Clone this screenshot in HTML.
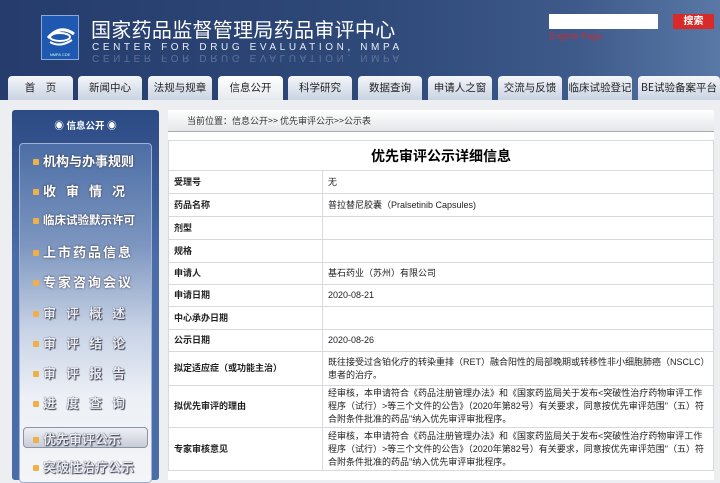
<!DOCTYPE html>
<html><head><meta charset="utf-8"><style>
*{margin:0;padding:0;box-sizing:border-box}
body{width:720px;height:480px;overflow:hidden;background:#eceef1;font-family:"Liberation Sans","Noto Sans CJK SC",sans-serif;position:relative}
.hdr{position:absolute;left:0;top:0;width:720px;height:100px;background:linear-gradient(90deg,#253c6c 0%,#2e4878 50%,#3d5a8a 80%,#5a78a6 100%)}
.logo{position:absolute;left:41px;top:15px;width:38px;height:45px;background:#1f58b0;border:1px solid #8ea8d8}
.logo span{position:absolute;bottom:2px;left:0;width:100%;text-align:center;font-size:4px;color:#cfe}
.t1{position:absolute;left:91px;top:14px;font-size:20px;color:#fff;letter-spacing:0.3px;white-space:nowrap;font-family:"Noto Sans CJK SC",sans-serif}
.t2{position:absolute;left:92px;top:42px;font-size:10px;color:#e8eef8;letter-spacing:3.6px;white-space:nowrap}
.t3{position:absolute;left:92px;top:52px;font-size:10px;color:#6e84aa;letter-spacing:3.6px;white-space:nowrap;transform:scaleY(-1);opacity:.7}
.srch{position:absolute;left:549px;top:14px;width:109px;height:15px;background:#fff}
.btn{position:absolute;left:673px;top:14px;width:41px;height:15px;background:#d92a2a;color:#fff;font-size:10px;text-align:center;line-height:15px;font-weight:bold}
.eng{position:absolute;left:549px;top:31px;font-size:9px;color:#c0303a}
.tab{position:absolute;top:76px;height:24px;background:linear-gradient(#f4f6fa,#c9d3e2);border-radius:4px 4px 0 0;font-size:10.5px;color:#222;text-align:center;line-height:24px;font-family:"Noto Sans CJK SC",sans-serif}
.tab.a{background:linear-gradient(#fff,#e6e9ee)}
.side{position:absolute;left:12px;top:110px;width:147px;height:370px;background:linear-gradient(#2c4a84,#4a6ca8 40%,#4a6ca8);border-radius:3px}
.sideh{position:absolute;left:0;top:8px;width:100%;text-align:center;color:#fff;font-size:9.5px;font-weight:bold}
.inner{position:absolute;left:7px;top:33px;width:133px;height:340px;border-radius:4px;background:linear-gradient(#4c6ea6 0%,#7d96c0 30%,#c8d3e6 55%,#edf0f6 75%,#f4f5f8 100%);border:1px solid #9fb2d4}
.it{position:absolute;left:13px;font-size:13px;font-weight:bold;font-family:"Noto Sans CJK SC",sans-serif;white-space:nowrap;color:#fff;text-shadow:0 0 2px #334}
.it:before{content:"";display:inline-block;width:6px;height:6px;background:#f0b048;margin-right:4px;vertical-align:middle;border-radius:1px}
.it.d{color:#e8ebf2;text-shadow:0 0 1px #223,1px 1px 1px #445}
.sel{position:absolute;left:3px;top:283px;width:125px;height:21px;background:linear-gradient(#eef0f4,#c8ccd6);border:1px solid #8a94a8;border-radius:4px}
.main{position:absolute;left:168px;top:110px;width:546px;height:370px;background:#fff}
.bc{position:absolute;left:0;top:0;width:546px;height:22px;background:linear-gradient(#fff,#e4e6ea);border-bottom:1px solid #aaa;font-size:9px;color:#333;line-height:22px;padding-left:19px;font-family:"Noto Sans CJK SC",sans-serif}
table{position:absolute;left:0;top:30px;width:546px;border-collapse:collapse;font-family:"Liberation Sans","Noto Sans CJK SC",sans-serif}
td{border:1px solid #d6d9dd;font-size:9px;color:#222;padding:0 5px;line-height:13px}
td.l{width:154px;font-weight:bold;font-size:9px;padding-left:5px}
th{height:30px;font-size:14px;font-weight:bold;border:1px solid #d6d9dd;font-family:"Noto Sans CJK SC",sans-serif}
</style></head><body>
<div class="hdr">
<div class="logo"><svg width="38" height="36" viewBox="0 0 38 36"><path d="M6 22 Q18 8 32 18" stroke="#fff" stroke-width="3" fill="none"/><ellipse cx="18" cy="21" rx="10" ry="4" fill="none" stroke="#fff" stroke-width="2"/><path d="M8 26 Q18 32 30 24" stroke="#fff" stroke-width="2" fill="none"/></svg><span>NMPA CDE</span></div>
<div class="t1">国家药品监督管理局药品审评中心</div>
<div class="t2">CENTER FOR DRUG EVALUATION, NMPA</div>
<div class="t3">CENTER FOR DRUG EVALUATION, NMPA</div>
<div class="srch"></div><div class="btn">搜索</div><div class="eng">English Page</div>
</div>
<div class="tab" style="left:8px;width:65px">首　页</div>
<div class="tab" style="left:78px;width:64px">新闻中心</div>
<div class="tab" style="left:148px;width:64px">法规与规章</div>
<div class="tab a" style="left:218px;width:65px">信息公开</div>
<div class="tab" style="left:288px;width:64px">科学研究</div>
<div class="tab" style="left:358px;width:64px">数据查询</div>
<div class="tab" style="left:428px;width:64px">申请人之窗</div>
<div class="tab" style="left:498px;width:64px">交流与反馈</div>
<div class="tab" style="left:568px;width:64px">临床试验登记</div>
<div class="tab" style="left:638px;width:82px">BE试验备案平台</div>
<div class="side">
<div class="sideh">◉ 信息公开 ◉</div>
<div class="inner">
<div class="sel"></div>
<div class="it" style="top:7px">机构与办事规则</div>
<div class="it" style="top:37px;letter-spacing:10px">收审情况</div>
<div class="it" style="top:68px;font-size:11.5px">临床试验默示许可</div>
<div class="it" style="top:98px;letter-spacing:2px">上市药品信息</div>
<div class="it" style="top:128px;letter-spacing:2px">专家咨询会议</div>
<div class="it d" style="top:159px;letter-spacing:10px">审评概述</div>
<div class="it d" style="top:189px;letter-spacing:10px">审评结论</div>
<div class="it d" style="top:219px;letter-spacing:10px">审评报告</div>
<div class="it d" style="top:249px;letter-spacing:10px">进度查询</div>
<div class="it d" style="top:285px">优先审评公示</div>
<div class="it d" style="top:313px">突破性治疗公示</div>
</div></div>
<div class="main">
<div class="bc">当前位置：信息公开&gt;&gt; 优先审评公示&gt;&gt;公示表</div>
<table>
<tr><th colspan="2">优先审评公示详细信息</th></tr>
<tr style="height:23px"><td class="l">受理号</td><td>无</td></tr>
<tr style="height:23px"><td class="l">药品名称</td><td>普拉替尼胶囊（Pralsetinib Capsules)</td></tr>
<tr style="height:23px"><td class="l">剂型</td><td></td></tr>
<tr style="height:23px"><td class="l">规格</td><td></td></tr>
<tr style="height:22px"><td class="l">申请人</td><td>基石药业（苏州）有限公司</td></tr>
<tr style="height:22px"><td class="l">申请日期</td><td>2020-08-21</td></tr>
<tr style="height:23px"><td class="l">中心承办日期</td><td></td></tr>
<tr style="height:22px"><td class="l">公示日期</td><td>2020-08-26</td></tr>
<tr style="height:34px"><td class="l">拟定适应症（或功能主治）</td><td>既往接受过含铂化疗的转染重排（RET）融合阳性的局部晚期或转移性非小细胞肺癌（NSCLC）患者的治疗。</td></tr>
<tr style="height:42px"><td class="l">拟优先审评的理由</td><td>经审核，本申请符合《药品注册管理办法》和《国家药监局关于发布&lt;突破性治疗药物审评工作程序（试行）&gt;等三个文件的公告》（2020年第82号）有关要求，同意按优先审评范围"（五）符合附条件批准的药品"纳入优先审评审批程序。</td></tr>
<tr style="height:43px"><td class="l">专家审核意见</td><td>经审核，本申请符合《药品注册管理办法》和《国家药监局关于发布&lt;突破性治疗药物审评工作程序（试行）&gt;等三个文件的公告》（2020年第82号）有关要求，同意按优先审评范围"（五）符合附条件批准的药品"纳入优先审评审批程序。</td></tr>
</table>
</div>
</body></html>
